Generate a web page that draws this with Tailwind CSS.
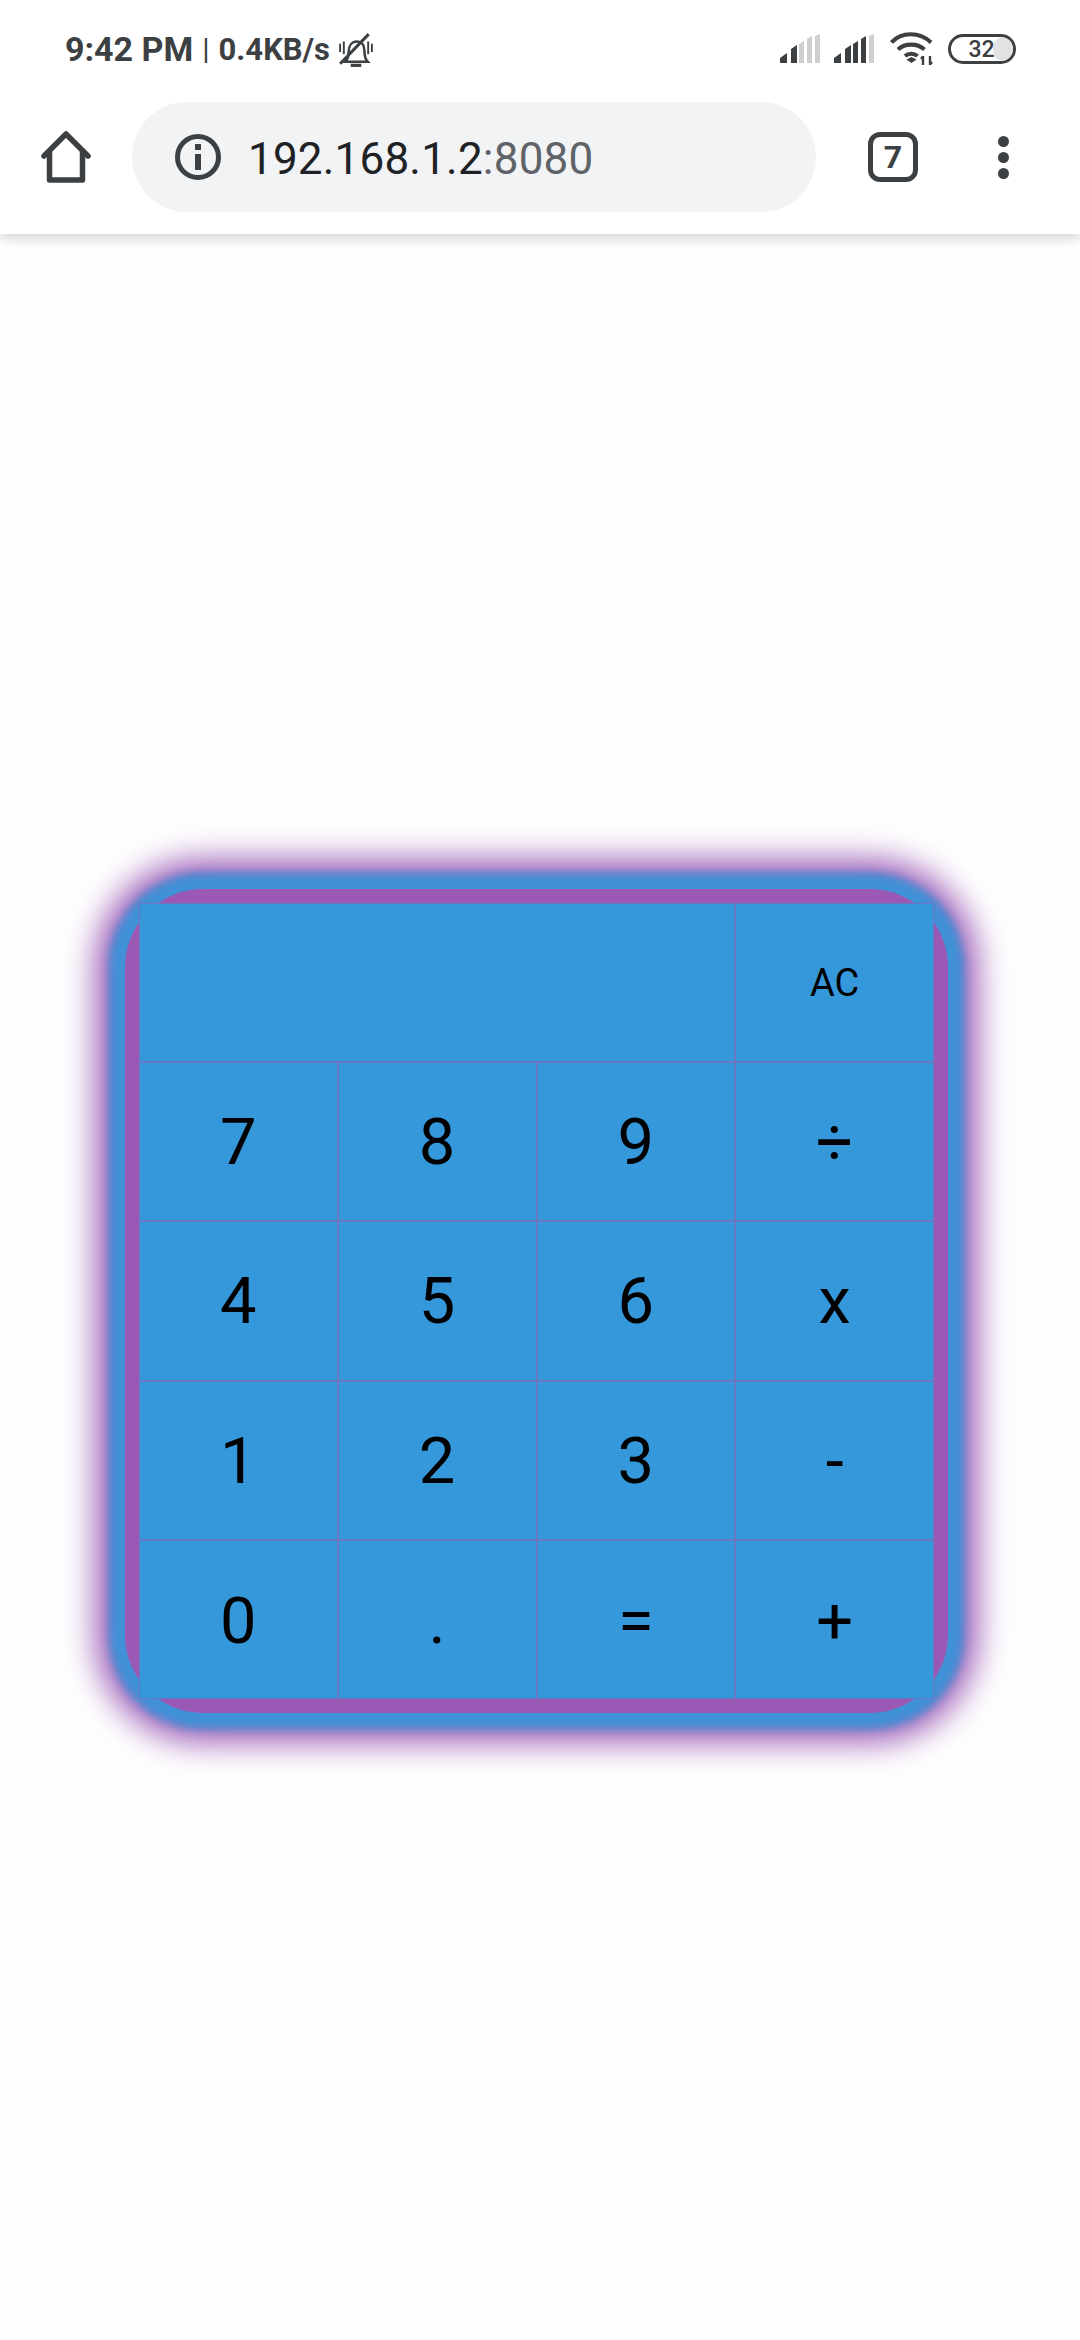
<!DOCTYPE html>
<html lang="en">
<head>
<meta charset="UTF-8">
<meta name="viewport" content="width=device-width, initial-scale=1.0">
<title>Calculator</title>
<script src="https://cdn.jsdelivr.net/npm/@tailwindcss/browser@4"></script>
</head>
<body class="bg-[#fefefe] font-['Roboto',sans-serif] w-[1080px] h-[2340px] overflow-hidden">
  <!-- Browser chrome -->
  <header class="relative z-10 h-[234px] bg-white shadow-[0_4px_12px_rgba(0,0,0,0.18)] flex flex-col">
    <div class="h-[102px] flex items-center pl-[65px] pr-[64px] pb-[4px] text-[#3c4043]">
      <span class="text-[34px] font-bold leading-none">9:42 PM</span>
      <span class="text-[30px] leading-none mx-[9px]">|</span>
      <span class="text-[31px] font-bold leading-none">0.4KB/s</span>
      <svg class="ml-[8px] mt-[1px]" width="36" height="36" viewBox="0 0 34 34" fill="none" stroke="#3c4043" stroke-width="2.400">
        <path d="M7 28c2-2 3-4 3-9 0-6 3-10 8-10 4 0 7 3 7 9 0 5 1 8 3 10z"/>
        <path d="M2 30 29 2" stroke-width="2.800"/>
        <path d="M2 11v8M5.500 9v12M28.500 9v12M32 11v8" stroke-width="1.800"/>
        <path d="M12 31.500h10" stroke-width="3"/>
      </svg>
      <div class="ml-auto flex items-center">
        <svg width="40" height="30" viewBox="0 0 40 30">
          <path d="M0 29v-5l7-5v10z" fill="#3c4043"/><path d="M11 29V15l6-4v18z" fill="#3c4043"/>
          <path d="M19 29V10l5-3v22z" fill="#cfcfcf"/><path d="M27 29V5l5-3v27z" fill="#cfcfcf"/><path d="M35 29V2l5-2v29z" fill="#cfcfcf"/>
        </svg>
        <svg class="ml-[14px]" width="40" height="30" viewBox="0 0 40 30">
          <path d="M0 29v-5l7-5v10z" fill="#3c4043"/><path d="M11 29V15l6-4v18z" fill="#3c4043"/>
          <path d="M19 29V10l5-3v22z" fill="#3c4043"/><path d="M27 29V5l5-3v27z" fill="#3c4043"/><path d="M35 29V2l5-2v29z" fill="#cfcfcf"/>
        </svg>
        <svg class="ml-[16px]" width="44" height="34" viewBox="0 0 44 34" fill="none" stroke="#3c4043" stroke-width="4.200">
          <path d="M1.500 10.500C11-0.500 30-0.500 41 10.500"/>
          <path d="M8 17.500c7-6.500 19-6.500 26.500 0"/>
          <path d="M15 24c3.500-3 9-3 12.500 0"/>
          <path d="M21.500 31l-5-3.500 5-2.500 5 2.500z" fill="#3c4043" stroke="none"/>
          <path d="M33 33V24M31 27l2-2.500M40 33V24M42 30l-2 2.500" stroke-width="2.400"/>
        </svg>
        <div class="relative ml-[14px] w-[68px] h-[30px] rounded-full border-[3px] border-[#3c4043] overflow-hidden flex items-center justify-center">
          <div class="absolute right-0 top-0 bottom-0 w-[20px] rounded-full bg-[#e2e2e2]"></div>
          <span class="relative text-[23px] leading-none text-[#3c4043] font-medium mr-[1px]">32</span>
        </div>
      </div>
    </div>
    <div class="h-[110px] flex items-center">
      <svg class="ml-[41px]" width="50" height="52" viewBox="0 0 50 52" fill="none" stroke="#3c4043" stroke-width="5.500" stroke-linejoin="round" stroke-linecap="round">
        <path d="M3 25 25 3l22 22"/>
        <path d="M8.500 21v28h33V21"/>
      </svg>
      <div class="ml-[41px] w-[684px] h-[110px] rounded-full bg-[#f1f3f4] flex items-center">
        <svg class="ml-[42px]" width="48" height="48" viewBox="0 0 48 48" fill="none">
          <circle cx="24" cy="24" r="20.500" stroke="#3c4043" stroke-width="5"/>
          <rect x="21" y="11" width="6" height="6" fill="#3c4043"/>
          <rect x="21" y="21" width="6" height="16" fill="#3c4043"/>
        </svg>
        <span class="ml-[26px] mt-[3px] text-[44px] leading-none text-[#202124] tracking-[0.2px]">192.168.1.2<span class="text-[#5f6368]">:8080</span></span>
      </div>
      <div class="ml-[52px] w-[50px] h-[50px] rounded-[12px] border-[5px] border-[#3c4043] flex items-center justify-center text-[32px] font-bold text-[#3c4043] leading-none">7</div>
      <div class="ml-[80px] flex flex-col gap-[5px]">
        <div class="w-[11px] h-[11px] rounded-full bg-[#3c4043]"></div>
        <div class="w-[11px] h-[11px] rounded-full bg-[#3c4043]"></div>
        <div class="w-[11px] h-[11px] rounded-full bg-[#3c4043]"></div>
      </div>
    </div>
  </header>

  <!-- Calculator -->
  <main class="pt-[655px] pl-[125px]">
    <div class="w-[823px] h-[824px] p-[14px] rounded-[78px] bg-[#9b59b6] shadow-[0_0_8px_16px_#4191d6,0_0_32px_29px_#9b59b6]">
      <div class="grid grid-cols-4 grid-rows-5 w-[795px] h-[796px] text-[65px] text-black leading-none">
        <div class="col-span-3 bg-[#3498db] border border-[#6a78c4]"></div>
        <button class="bg-[#3498db] border border-[#6a78c4] text-[38px]">AC</button>
        <button class="bg-[#3498db] border border-[#6a78c4] pt-[2px]">7</button>
        <button class="bg-[#3498db] border border-[#6a78c4] pt-[2px]">8</button>
        <button class="bg-[#3498db] border border-[#6a78c4] pt-[2px]">9</button>
        <button class="bg-[#3498db] border border-[#6a78c4] pt-[2px]">÷</button>
        <button class="bg-[#3498db] border border-[#6a78c4] pt-[2px]">4</button>
        <button class="bg-[#3498db] border border-[#6a78c4] pt-[2px]">5</button>
        <button class="bg-[#3498db] border border-[#6a78c4] pt-[2px]">6</button>
        <button class="bg-[#3498db] border border-[#6a78c4] pt-[2px]">x</button>
        <button class="bg-[#3498db] border border-[#6a78c4] pt-[2px]">1</button>
        <button class="bg-[#3498db] border border-[#6a78c4] pt-[2px]">2</button>
        <button class="bg-[#3498db] border border-[#6a78c4] pt-[2px]">3</button>
        <button class="bg-[#3498db] border border-[#6a78c4] pt-[2px]">-</button>
        <button class="bg-[#3498db] border border-[#6a78c4] pt-[4px]">0</button>
        <button class="bg-[#3498db] border border-[#6a78c4] pt-[4px]">.</button>
        <button class="bg-[#3498db] border border-[#6a78c4] pt-[4px]">=</button>
        <button class="bg-[#3498db] border border-[#6a78c4] pt-[4px]">+</button>
      </div>
    </div>
  </main>
</body>
</html>
